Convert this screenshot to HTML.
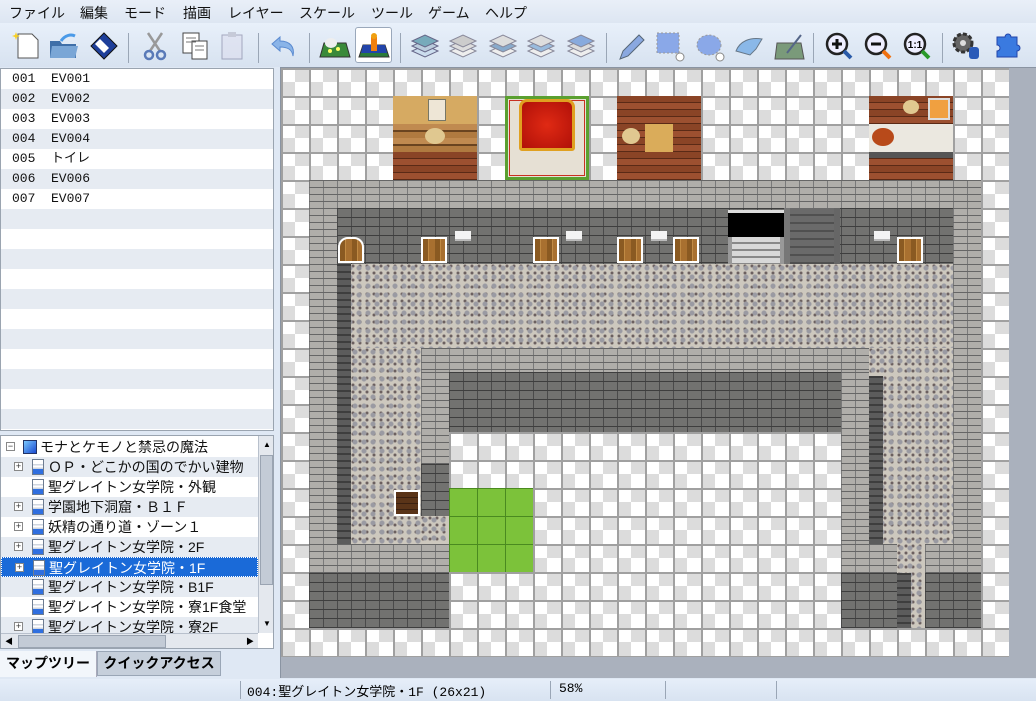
<!DOCTYPE html>
<html><head><meta charset="utf-8"><style>
*{margin:0;padding:0;box-sizing:border-box}
body{width:1036px;height:701px;position:relative;overflow:hidden;background:#dfe8f4;font-family:"Liberation Sans","Noto Sans CJK JP",sans-serif}
.a{position:absolute}
#menu{left:0;top:0;width:1036px;height:23px;background:linear-gradient(#e9eff8,#dde6f2);font-size:14px;color:#111}
#menu span{position:absolute;top:3px}
#tb{left:0;top:23px;width:1036px;height:44px;background:linear-gradient(#e8f0fa,#d7e2f0)}
.sep{position:absolute;top:10px;width:1px;height:30px;background:#9aa6b6}
.ic{position:absolute;top:6px;width:34px;height:34px}
#ev{left:0;top:68px;width:274px;height:363px;background:#fff;border:1px solid #9aa4b0;font-family:"Liberation Mono",monospace;font-size:13px;
background-image:repeating-linear-gradient(#fff 0 20px,#e6ebf2 20px 40px)}
#ev div{height:20px;line-height:20px;padding-left:11px;color:#111;font-family:"Liberation Mono","Noto Sans CJK JP",monospace}
#tree{left:0;top:435px;width:274px;height:214px;background:#fff;border:1px solid #9aa4b0;font-size:14px;overflow:hidden}
.tr{position:absolute;left:0;width:257px;height:20px;line-height:20px;color:#111}
.tr .pl{position:absolute;left:13px;top:5px;width:9px;height:9px;border:1px solid #888;background:#fff;font-size:9px;line-height:7px;text-align:center;color:#333}
.tr .doc{position:absolute;left:31px;top:2px;width:12px;height:16px;background:linear-gradient(#fff 0 30%,#cfd6e0 30% 40%,#fff 40% 55%,#cfd6e0 55% 65%,#2f6fe0 65%);border:1px solid #6d7c90}
.tr .t{position:absolute;left:47px;top:0}
.map{position:absolute}
.ck{background:linear-gradient(90deg,#a0a0a0 2px,transparent 2px) 0 0/28px 28px,linear-gradient(#a0a0a0 2px,transparent 2px) 0 0/28px 28px,repeating-conic-gradient(#dcdcdc 0 25%,#fff 0 50%) 0 0/28px 28px}
.lb{background:repeating-linear-gradient(#666 0 1px,transparent 1px 7px),repeating-linear-gradient(90deg,#7a7a7a 0 1px,transparent 1px 14px),#b0aeaa}
.db{background:repeating-linear-gradient(#3e3e3e 0 1px,transparent 1px 9px),repeating-linear-gradient(90deg,#4a4a4a 0 1px,transparent 1px 14px),#727270}
.cb{background:radial-gradient(circle at 4px 4px,#9a9aa2 2px,transparent 3px) 0 0/9px 9px,radial-gradient(circle at 2px 2px,#6a5e5e 1px,transparent 2px) 0 0/7px 7px,#cdc8be}
.ds{background:repeating-linear-gradient(#3e3e3e 0 2px,#5c5c5c 2px 7px)}
.door{position:absolute;width:26px;height:26px;border:2px solid #fff;background:repeating-linear-gradient(90deg,#8a5a22 0 5px,#c08a44 5px 6px,#a87030 6px 12px)}
.sign{position:absolute;width:16px;height:10px;background:#f4f4f4;border-bottom:2px solid #bbb}
.wood{background:repeating-linear-gradient(#8a4426 0 6px,#5a2a16 6px 7px,#9c5030 7px 13px,#5a2a16 13px 14px)}
#st{left:0;top:679px;width:1036px;height:22px;background:linear-gradient(#e6eef9,#d8e3f1);font-family:"Liberation Mono","Noto Sans CJK JP",monospace;font-size:13px}
#st .s{position:absolute;top:2px;width:1px;height:18px;background:#9aa6b6}
</style></head><body>
<div id="menu" class="a">
<span style="left:9px">ファイル</span><span style="left:80px">編集</span><span style="left:124px">モード</span><span style="left:183px">描画</span><span style="left:228px">レイヤー</span><span style="left:299px">スケール</span><span style="left:371px">ツール</span><span style="left:428px">ゲーム</span><span style="left:485px">ヘルプ</span>
</div>
<div id="tb" class="a">
<svg class="ic" style="left:10px" viewBox="0 0 34 34"><path d="M8 5h14l6 6v18H8z" fill="#fff" stroke="#555"/><path d="M6 3l1 3 3 1-3 1-1 3-1-3-3-1 3-1z" fill="#f8d020"/></svg>
<svg class="ic" style="left:47px" viewBox="0 0 34 34"><path d="M3 12h10l2 3h14v14H3z" fill="#3f6fa8"/><path d="M5 17h26l-3 12H3z" fill="#7aa6d6"/><path d="M14 12c4-6 10-7 14-5" stroke="#4a9ae8" stroke-width="3" fill="none"/></svg>
<svg class="ic" style="left:87px" viewBox="0 0 34 34"><path d="M17 4l13 13-13 13L4 17z" fill="#1e3f9a" stroke="#111"/><path d="M13 10l9 9-5 5-9-9z" fill="#fff"/></svg>
<div class="sep" style="left:128px"></div>
<svg class="ic" style="left:138px" viewBox="0 0 34 34"><path d="M10 4l12 18M24 4L12 22" stroke="#999" stroke-width="2.5"/><circle cx="11" cy="26" r="4" fill="none" stroke="#5a7ab8" stroke-width="2.5"/><circle cx="23" cy="26" r="4" fill="none" stroke="#5a7ab8" stroke-width="2.5"/></svg>
<svg class="ic" style="left:178px" viewBox="0 0 34 34"><rect x="5" y="4" width="16" height="20" fill="#fff" stroke="#444"/><rect x="14" y="12" width="15" height="18" fill="#fff" stroke="#444"/><path d="M8 9h10M8 13h10M17 17h9M17 21h9" stroke="#777"/></svg>
<svg class="ic" style="left:216px" viewBox="0 0 34 34" opacity=".5"><rect x="6" y="6" width="20" height="24" fill="#dde" stroke="#668"/><rect x="12" y="3" width="8" height="5" fill="#aab"/></svg>
<div class="sep" style="left:258px"></div>
<svg class="ic" style="left:268px" viewBox="0 0 34 34"><path d="M12 8L4 15l8 7v-4c7 0 12 2 13 9 2-9-3-15-13-15z" fill="#8ab4e8" stroke="#5a8ad0"/></svg>
<div class="sep" style="left:309px"></div>
<svg class="ic" style="left:318px" viewBox="0 0 34 34"><path d="M6 14h22l4 14H2z" fill="#3a8a3a" stroke="#333"/><ellipse cx="13" cy="14" rx="6" ry="5" fill="#eee"/><circle cx="12" cy="22" r="2" fill="#ff6"/><circle cx="20" cy="20" r="2" fill="#ff6"/></svg>
<div class="a" style="left:355px;top:4px;width:37px;height:36px;background:#fff;border:1px solid #9aa8bb;border-radius:3px"></div>
<svg class="ic" style="left:357px" viewBox="0 0 34 34"><path d="M6 16h22l4 12H2z" fill="#2a7a3a" stroke="#333"/><path d="M6 16h22l2 8H4z" fill="#2244aa"/><rect x="14" y="8" width="6" height="14" fill="#f08010"/><circle cx="17" cy="7" r="3" fill="#f0a010"/></svg>
<div class="sep" style="left:400px"></div>
<svg class="ic" style="left:408px" viewBox="0 0 34 34"><g stroke="#668"><path d="M4 22l13 6 13-6-13-6z" fill="#cde"/><path d="M4 17l13 6 13-6-13-6z" fill="#bcd"/><path d="M4 12l13 6 13-6-13-6z" fill="#7ab"/></g></svg>
<svg class="ic" style="left:446px" viewBox="0 0 34 34"><g stroke="#889"><path d="M4 22l13 6 13-6-13-6z" fill="#eee"/><path d="M4 17l13 6 13-6-13-6z" fill="#ddd"/><path d="M4 12l13 6 13-6-13-6z" fill="#ccc"/></g></svg>
<svg class="ic" style="left:486px" viewBox="0 0 34 34"><g stroke="#889"><path d="M4 22l13 6 13-6-13-6z" fill="#eee"/><path d="M4 17l13 6 13-6-13-6z" fill="#8ac"/><path d="M4 12l13 6 13-6-13-6z" fill="#ddd"/></g></svg>
<svg class="ic" style="left:524px" viewBox="0 0 34 34"><g stroke="#889"><path d="M4 22l13 6 13-6-13-6z" fill="#eee"/><path d="M4 17l13 6 13-6-13-6z" fill="#9bd"/><path d="M4 12l13 6 13-6-13-6z" fill="#ddd"/></g></svg>
<svg class="ic" style="left:564px" viewBox="0 0 34 34"><g stroke="#889"><path d="M4 22l13 6 13-6-13-6z" fill="#eee"/><path d="M4 17l13 6 13-6-13-6z" fill="#ddd"/><path d="M4 12l13 6 13-6-13-6z" fill="#8ad"/></g></svg>
<div class="sep" style="left:606px"></div>
<svg class="ic" style="left:614px" viewBox="0 0 34 34"><path d="M6 30l3-8 16-16 5 5-16 16z" fill="#8aa8e0" stroke="#567"/></svg>
<svg class="ic" style="left:653px" viewBox="0 0 34 34"><rect x="4" y="4" width="22" height="20" fill="#8aa8e8" stroke="#999" stroke-dasharray="2"/><circle cx="27" cy="28" r="4" fill="#fff" stroke="#888"/></svg>
<svg class="ic" style="left:693px" viewBox="0 0 34 34"><ellipse cx="16" cy="16" rx="12" ry="10" fill="#8aa8e8" stroke="#999" stroke-dasharray="2"/><circle cx="27" cy="28" r="4" fill="#fff" stroke="#888"/></svg>
<svg class="ic" style="left:733px" viewBox="0 0 34 34"><path d="M3 22c4-10 14-14 26-12l-6 10-6 6z" fill="#8ab8e8" stroke="#678"/></svg>
<svg class="ic" style="left:773px" viewBox="0 0 34 34"><path d="M4 14h24l3 16H2z" fill="#7a9a7a" stroke="#555"/><path d="M14 24L28 6" stroke="#568" stroke-width="2"/></svg>
<div class="sep" style="left:813px"></div>
<svg class="ic" style="left:822px" viewBox="0 0 34 34"><circle cx="15" cy="15" r="10" fill="#eef" stroke="#222" stroke-width="2.5"/><path d="M10 15h10M15 10v10" stroke="#111" stroke-width="3"/><path d="M22 22l7 7" stroke="#2a5aa8" stroke-width="4"/></svg>
<svg class="ic" style="left:861px" viewBox="0 0 34 34"><circle cx="15" cy="15" r="10" fill="#eef" stroke="#222" stroke-width="2.5"/><path d="M10 15h10" stroke="#111" stroke-width="3"/><path d="M22 22l7 7" stroke="#f07010" stroke-width="4"/></svg>
<svg class="ic" style="left:900px" viewBox="0 0 34 34"><circle cx="15" cy="15" r="10" fill="#eef" stroke="#222" stroke-width="2.5"/><text x="15" y="19" font-size="10" text-anchor="middle" font-weight="bold" font-family="Liberation Sans">1:1</text><path d="M22 22l7 7" stroke="#2a9a2a" stroke-width="4"/></svg>
<div class="sep" style="left:942px"></div>
<svg class="ic" style="left:949px" viewBox="0 0 34 34"><circle cx="14" cy="14" r="9" fill="#666" stroke="#333" stroke-width="3" stroke-dasharray="4 2"/><circle cx="14" cy="14" r="3" fill="#ddd"/><rect x="20" y="18" width="10" height="12" rx="3" fill="#2a5ab8"/></svg>
<svg class="ic" style="left:989px" viewBox="0 0 34 34"><path d="M8 8h8a3 3 0 016 0h6v8a3 3 0 010 6v6H8v-6a3 3 0 000-6z" fill="#3a7ae0" stroke="#24a"/></svg>
</div>

<div id="ev" class="a">
<div>001&nbsp;&nbsp;EV001</div><div>002&nbsp;&nbsp;EV002</div><div>003&nbsp;&nbsp;EV003</div><div>004&nbsp;&nbsp;EV004</div><div>005&nbsp;&nbsp;トイレ</div><div>006&nbsp;&nbsp;EV006</div><div>007&nbsp;&nbsp;EV007</div>
</div>

<div id="tree" class="a">
<div class="tr" style="top:1px"><span class="pl" style="left:5px">−</span><span class="a" style="left:22px;top:3px;width:14px;height:14px;background:linear-gradient(135deg,#7ac8ff,#1a4ad0);border:1px solid #236"></span><span class="t" style="left:39px">モナとケモノと禁忌の魔法</span></div>
<div class="tr" style="top:21px;background:#e6ebf2"><span class="pl">+</span><span class="doc"></span><span class="t">ＯＰ・どこかの国のでかい建物</span></div>
<div class="tr" style="top:41px"><span class="doc"></span><span class="t">聖グレイトン女学院・外観</span></div>
<div class="tr" style="top:61px;background:#e6ebf2"><span class="pl">+</span><span class="doc"></span><span class="t">学園地下洞窟・Ｂ１Ｆ</span></div>
<div class="tr" style="top:81px"><span class="pl">+</span><span class="doc"></span><span class="t">妖精の通り道・ゾーン１</span></div>
<div class="tr" style="top:101px;background:#e6ebf2"><span class="pl">+</span><span class="doc"></span><span class="t">聖グレイトン女学院・2F</span></div>
<div class="tr" style="top:121px;background:#1a6ad8;color:#fff;border:1px dotted #fff"><span class="pl">+</span><span class="doc"></span><span class="t">聖グレイトン女学院・1F</span></div>
<div class="tr" style="top:141px;background:#e6ebf2"><span class="doc"></span><span class="t">聖グレイトン女学院・B1F</span></div>
<div class="tr" style="top:161px"><span class="doc"></span><span class="t">聖グレイトン女学院・寮1F食堂</span></div>
<div class="tr" style="top:181px;background:#e6ebf2;height:16px;overflow:hidden"><span class="pl">+</span><span class="doc"></span><span class="t">聖グレイトン女学院・寮2F</span></div>
<div class="a" style="left:257px;top:0;width:16px;height:197px;background:#e4e8ee;border-left:1px solid #b8c0cc"><div style="margin:19px 1px 0;height:130px;background:#c3cbd6;border:1px solid #9aa4b2"></div><div class="a" style="left:4px;top:4px;font-size:8px">▲</div><div class="a" style="left:4px;top:183px;font-size:8px">▼</div></div>
<div class="a" style="left:0;top:197px;width:257px;height:16px;background:#e4e8ee;border-top:1px solid #b8c0cc"><div class="a" style="left:17px;top:1px;width:148px;height:13px;background:#c3cbd6;border:1px solid #9aa4b2"></div><div class="a" style="left:4px;top:2px;font-size:8px">◀</div><div class="a" style="left:245px;top:2px;font-size:8px">▶</div></div>
</div>
<div class="a" style="left:0;top:651px;width:97px;height:26px;background:#f2f6fb;font-size:14px;font-weight:bold;line-height:24px;text-align:center;border-right:1px solid #aab">マップツリー</div>
<div class="a" style="left:97px;top:651px;width:124px;height:25px;background:#c6cfdb;border:1px solid #9aa6b6;font-size:14px;font-weight:bold;line-height:22px;text-align:center">クイックアクセス</div>

<div class="a" style="left:280px;top:67px;width:756px;height:611px;background:#aab1bd;border-top:1px solid #8a94a2;border-left:1px solid #8a94a2"></div>
<div class="map ck" style="left:281px;top:68px;width:728px;height:589px"></div>
<div class="map" style="left:393px;top:96px;width:84px;height:28px;background:#d6aa62"></div>
<div class="map" style="left:428px;top:99px;width:18px;height:22px;background:#eee6d6;border:1px solid #776"></div>
<div class="map" style="left:393px;top:124px;width:84px;height:28px;background:repeating-linear-gradient(#c08a50 0 6px,#6a4420 6px 8px,#b07a40 8px 14px);"></div>
<div class="map" style="left:425px;top:128px;width:20px;height:16px;background:#e0c890;border-radius:50%"></div>
<div class="map wood" style="left:393px;top:152px;width:84px;height:28px"></div>
<div class="map" style="left:505px;top:96px;width:84px;height:84px;background:#e6e0d4;border:3px solid #5aa030;outline:1px solid #c83020;outline-offset:-5px"></div>
<div class="map" style="left:519px;top:99px;width:56px;height:52px;background:radial-gradient(#e02a14,#b01008);border:3px solid #e0a020;border-radius:8px 8px 3px 3px"></div>
<div class="map wood" style="left:617px;top:96px;width:84px;height:84px"></div>
<div class="map" style="left:645px;top:124px;width:28px;height:28px;background:#daac5a"></div>
<div class="map" style="left:622px;top:128px;width:18px;height:16px;background:#e0c890;border-radius:50%"></div>
<div class="map wood" style="left:869px;top:96px;width:84px;height:84px"></div>
<div class="map" style="left:869px;top:124px;width:84px;height:28px;background:#ebe8e0"></div>
<div class="map" style="left:869px;top:152px;width:84px;height:6px;background:#555"></div>
<div class="map" style="left:872px;top:128px;width:22px;height:18px;background:#b84a1a;border-radius:50%"></div>
<div class="map" style="left:928px;top:98px;width:22px;height:22px;background:#f0a040;border:2px solid #ddd"></div>
<div class="map" style="left:903px;top:100px;width:16px;height:14px;background:#e0c890;border-radius:50%"></div>
<div class="map lb" style="left:309px;top:180px;width:672px;height:28px"></div>
<div class="map lb" style="left:309px;top:208px;width:28px;height:336px"></div>
<div class="map lb" style="left:953px;top:208px;width:28px;height:336px"></div>
<div class="map db" style="left:337px;top:208px;width:616px;height:56px"></div>
<div class="map cb" style="left:337px;top:264px;width:616px;height:84px"></div>
<div class="map ds" style="left:337px;top:264px;width:14px;height:280px"></div>
<div class="map cb" style="left:351px;top:348px;width:70px;height:196px"></div>
<div class="map cb" style="left:421px;top:516px;width:28px;height:28px"></div>
<div class="map lb" style="left:421px;top:348px;width:448px;height:24px"></div>
<div class="map lb" style="left:421px;top:372px;width:28px;height:92px"></div>
<div class="map db" style="left:421px;top:464px;width:28px;height:52px"></div>
<div class="map db" style="left:449px;top:372px;width:392px;height:60px"></div>
<div class="map lb" style="left:841px;top:372px;width:28px;height:172px"></div>
<div class="map cb" style="left:869px;top:348px;width:84px;height:196px"></div>
<div class="map ds" style="left:869px;top:376px;width:14px;height:168px"></div>
<div class="map" style="left:449px;top:488px;width:84px;height:84px;background:linear-gradient(90deg,#4a8a20 1px,transparent 1px) 0 0/28px 28px,linear-gradient(#4a8a20 1px,transparent 1px) 0 0/28px 28px,#7cc23a"></div>
<div class="map lb" style="left:309px;top:544px;width:140px;height:29px"></div>
<div class="map db" style="left:309px;top:573px;width:140px;height:55px"></div>
<div class="map lb" style="left:841px;top:544px;width:56px;height:29px"></div>
<div class="map lb" style="left:925px;top:544px;width:56px;height:29px"></div>
<div class="map db" style="left:841px;top:573px;width:56px;height:55px"></div>
<div class="map db" style="left:925px;top:573px;width:56px;height:55px"></div>
<div class="map cb" style="left:897px;top:544px;width:28px;height:84px"></div>
<div class="map ds" style="left:897px;top:573px;width:14px;height:55px"></div>
<div class="map" style="left:728px;top:210px;width:56px;height:27px;background:#000;border-top:3px solid #ddd"></div>
<div class="map" style="left:728px;top:237px;width:56px;height:27px;background:repeating-linear-gradient(#d8d8d8 0 5px,#888 5px 7px);border-left:4px solid #999;border-right:4px solid #999"></div>
<div class="map" style="left:784px;top:208px;width:56px;height:56px;background:repeating-linear-gradient(#6a6a6a 0 6px,#505050 6px 8px);border-left:6px solid #777;border-right:6px solid #666"></div>
<div class="door" style="left:338px;top:237px;border-radius:10px 10px 0 0"></div>
<div class="door" style="left:421px;top:237px"></div>
<div class="door" style="left:533px;top:237px"></div>
<div class="door" style="left:617px;top:237px"></div>
<div class="door" style="left:673px;top:237px"></div>
<div class="door" style="left:897px;top:237px"></div>
<div class="door" style="left:394px;top:490px;background:repeating-linear-gradient(#5a3418 0 5px,#3a2010 5px 6px)"></div>
<div class="sign" style="left:455px;top:231px"></div>
<div class="sign" style="left:566px;top:231px"></div>
<div class="sign" style="left:651px;top:231px"></div>
<div class="sign" style="left:874px;top:231px"></div>

<div id="st" class="a">
<div class="s" style="left:240px"></div><div class="s" style="left:550px"></div><div class="s" style="left:665px"></div><div class="s" style="left:776px"></div>
<span class="a" style="left:247px;top:2px">004:聖グレイトン女学院・1F (26x21)</span>
<span class="a" style="left:559px;top:2px">58%</span>
</div>
</body></html>
